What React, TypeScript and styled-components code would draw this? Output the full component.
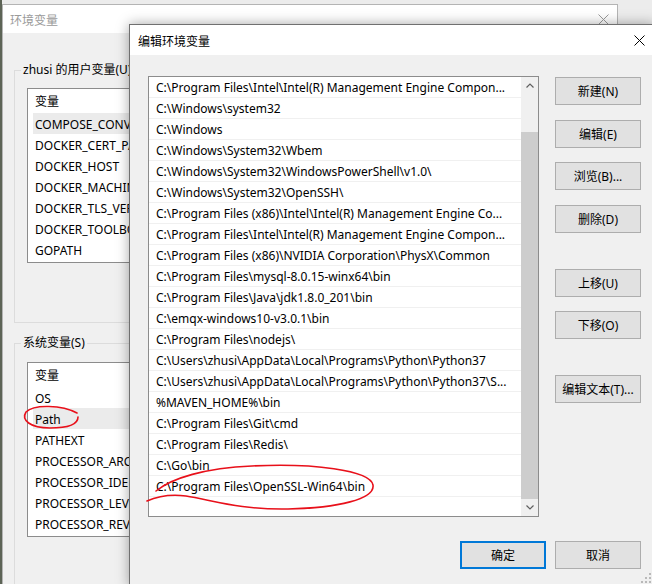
import styled, { createGlobalStyle } from "styled-components";

const GlobalStyle = createGlobalStyle`
  html, body {
    margin: 0;
    padding: 0;
  }
  body {
    width: 652px;
    height: 584px;
    overflow: hidden;
    font-family: "Noto Sans", "Noto Sans CJK SC", sans-serif;
    font-size: 12px;
    color: #000;
  }
`;

const Desktop = styled.div`
  position: relative;
  width: 652px;
  height: 584px;
  overflow: hidden;
  background: linear-gradient(to right, #5d6456 0 2px, #ececec 2px);
`;

/* ---------- background window: 环境变量 ---------- */

const BackWindow = styled.div`
  position: absolute;
  left: 2px;
  top: 4px;
  width: 616px;
  height: 600px;
  box-sizing: border-box;
  border: 1px solid #b4b4b4;
  background: #f0f0f0;
  display: flex;
  flex-direction: column;
`;

const TitleBar = styled.div<{ $height: number; $inactive?: boolean }>`
  height: ${(p) => p.$height}px;
  flex-shrink: 0;
  background: #fff;
  display: flex;
  align-items: center;
  padding-left: ${(p) => (p.$inactive ? 7 : 8)}px;
  color: ${(p) => (p.$inactive ? "#9a9a9a" : "#000")};
`;

const TitleText = styled.span`
  flex: 1;
  padding-top: 1px;
`;

const CloseButton = styled.div<{ $width: number }>`
  width: ${(p) => p.$width}px;
  height: 100%;
  display: flex;
  align-items: center;
  justify-content: center;
`;

const BackBody = styled.div`
  padding: 29px 0 0 11px;
  display: flex;
  flex-direction: column;
`;

const Group = styled.fieldset<{ $pt: number; $pb: number; $mt?: number }>`
  margin: ${(p) => p.$mt ?? 0}px 0 0 0;
  padding: ${(p) => p.$pt}px 12px ${(p) => p.$pb}px 12px;
  border: 1px solid #dcdcdc;
  min-width: 0;
  width: 600px;
  box-sizing: border-box;
`;

const Legend = styled.legend`
  padding: 0 2px;
  margin-left: -6px;
  line-height: 16px;
`;

/* the part of the list right of the dialog's edge is hidden by the dialog */
const VarList = styled.div`
  width: 112px;
  height: 175px;
  box-sizing: border-box;
  border: 1px solid #8c8c8c;
  border-right: none;
  background: #fff;
  padding-left: 5px;
  overflow: hidden;
`;

const VarHeader = styled.div`
  height: 24px;
  line-height: 26px;
  padding-left: 2px;
  overflow: hidden;
`;

const VarRow = styled.div<{ $selected?: boolean }>`
  height: 21px;
  line-height: 23px;
  padding-left: 2px;
  background: ${(p) => (p.$selected ? "#ebebeb" : "transparent")};
  white-space: nowrap;
  overflow: hidden;
`;

/* ---------- foreground dialog: 编辑环境变量 ---------- */

const Dialog = styled.div`
  position: absolute;
  left: 129px;
  top: 24px;
  width: 526px;
  height: 563px;
  box-sizing: border-box;
  border: 1px solid #707070;
  background: #f0f0f0;
  box-shadow: 0 0 12px rgba(0, 0, 0, 0.35);
  display: flex;
  flex-direction: column;
`;

const DialogBody = styled.div`
  padding: 21px 13px 0 18px;
  display: flex;
  flex-direction: column;
`;

const MainRow = styled.div`
  display: flex;
  align-items: flex-start;
`;

const PathList = styled.div`
  width: 391px;
  height: 441px;
  box-sizing: border-box;
  border: 1px solid #8c8c8c;
  background: #fff;
  display: flex;
  flex-shrink: 0;
`;

const PathRows = styled.div`
  flex: 1;
  min-width: 0;
  overflow: hidden;
`;

const PathRow = styled.div`
  height: 20px;
  line-height: 22px;
  border-bottom: 1px solid #f0f0f0;
  padding-left: 7px;
  white-space: nowrap;
  overflow: hidden;
`;

const ScrollBar = styled.div`
  width: 17px;
  flex-shrink: 0;
  display: flex;
  flex-direction: column;
  background: #f0f0f0;
`;

const ScrollArrow = styled.div`
  height: 17px;
  flex-shrink: 0;
  display: flex;
  align-items: center;
  justify-content: center;
`;

const ScrollThumb = styled.div`
  flex: 1;
  margin-top: 38px;
  background: #cdcdcd;
`;

const SideColumn = styled.div`
  margin-left: 16px;
  display: flex;
  flex-direction: column;
`;

const Button = styled.div<{ $mt?: number; $default?: boolean }>`
  width: 86px;
  height: 28px;
  box-sizing: border-box;
  margin-top: ${(p) => p.$mt ?? 0}px;
  background: #e1e1e1;
  border: ${(p) => (p.$default ? "2px solid #0078d7" : "1px solid #adadad")};
  display: flex;
  align-items: center;
  justify-content: center;
  white-space: nowrap;
`;

const Footer = styled.div`
  margin-top: 24px;
  display: flex;
  justify-content: flex-end;
  gap: 9px;
`;

const Grip = styled.svg`
  position: absolute;
  right: 2px;
  bottom: 2px;
`;

const Annotation = styled.svg`
  position: absolute;
  left: 0;
  top: 0;
  pointer-events: none;
  z-index: 10;
`;

// only the part left of the dialog is visible in the back window
const userVars = [
  "COMPOSE_CONV",
  "DOCKER_CERT_PA",
  "DOCKER_HOST",
  "DOCKER_MACHINE",
  "DOCKER_TLS_VER",
  "DOCKER_TOOLBO",
  "GOPATH",
];

const systemVars = [
  "OS",
  "Path",
  "PATHEXT",
  "PROCESSOR_ARC",
  "PROCESSOR_IDE",
  "PROCESSOR_LEV",
  "PROCESSOR_REV",
];

const paths = [
  "C:\\Program Files\\Intel\\Intel(R) Management Engine Compon...",
  "C:\\Windows\\system32",
  "C:\\Windows",
  "C:\\Windows\\System32\\Wbem",
  "C:\\Windows\\System32\\WindowsPowerShell\\v1.0\\",
  "C:\\Windows\\System32\\OpenSSH\\",
  "C:\\Program Files (x86)\\Intel\\Intel(R) Management Engine Co...",
  "C:\\Program Files\\Intel\\Intel(R) Management Engine Compon...",
  "C:\\Program Files (x86)\\NVIDIA Corporation\\PhysX\\Common",
  "C:\\Program Files\\mysql-8.0.15-winx64\\bin",
  "C:\\Program Files\\Java\\jdk1.8.0_201\\bin",
  "C:\\emqx-windows10-v3.0.1\\bin",
  "C:\\Program Files\\nodejs\\",
  "C:\\Users\\zhusi\\AppData\\Local\\Programs\\Python\\Python37",
  "C:\\Users\\zhusi\\AppData\\Local\\Programs\\Python\\Python37\\S...",
  "%MAVEN_HOME%\\bin",
  "C:\\Program Files\\Git\\cmd",
  "C:\\Program Files\\Redis\\",
  "C:\\Go\\bin",
  "C:\\Program Files\\OpenSSL-Win64\\bin",
];

function CloseIcon({ color }: { color: string }) {
  return (
    <svg width="11" height="11" viewBox="0 0 11 11">
      <path d="M0.5 0.5L10.5 10.5M10.5 0.5L0.5 10.5" stroke={color} strokeWidth="1" fill="none" />
    </svg>
  );
}

function Chevron({ up }: { up?: boolean }) {
  return (
    <svg width="8" height="5" viewBox="0 0 8 5">
      <path
        d={up ? "M0.5 4.5L4 1L7.5 4.5" : "M0.5 0.5L4 4L7.5 0.5"}
        stroke="#606060"
        strokeWidth="1.2"
        fill="none"
      />
    </svg>
  );
}

export default function App() {
  return (
    <>
      <GlobalStyle />
      <Desktop>
        <BackWindow>
          <TitleBar $height={28} $inactive>
            <TitleText>环境变量</TitleText>
            <CloseButton $width={28}>
              <CloseIcon color="#9a9a9a" />
            </CloseButton>
          </TitleBar>
          <BackBody>
            <Group $pt={10} $pb={59}>
              <Legend>zhusi 的用户变量(U)</Legend>
              <VarList>
                <VarHeader>变量</VarHeader>
                {userVars.map((v, i) => (
                  <VarRow key={v} $selected={i === 0}>
                    {v}
                  </VarRow>
                ))}
              </VarList>
            </Group>
            <Group $pt={11} $pb={60} $mt={12}>
              <Legend>系统变量(S)</Legend>
              <VarList>
                <VarHeader>变量</VarHeader>
                {systemVars.map((v) => (
                  <VarRow key={v} $selected={v === "Path"}>
                    {v}
                  </VarRow>
                ))}
              </VarList>
            </Group>
          </BackBody>
        </BackWindow>

        <Dialog>
          <TitleBar $height={30}>
            <TitleText>编辑环境变量</TitleText>
            <CloseButton $width={30}>
              <CloseIcon color="#000" />
            </CloseButton>
          </TitleBar>
          <DialogBody>
            <MainRow>
              <PathList>
                <PathRows>
                  {paths.map((p, i) => (
                    <PathRow key={i}>{p}</PathRow>
                  ))}
                </PathRows>
                <ScrollBar>
                  <ScrollArrow>
                    <Chevron up />
                  </ScrollArrow>
                  <ScrollThumb />
                  <ScrollArrow>
                    <Chevron />
                  </ScrollArrow>
                </ScrollBar>
              </PathList>
              <SideColumn>
                <Button $mt={1}>新建(N)</Button>
                <Button $mt={15}>编辑(E)</Button>
                <Button $mt={14}>浏览(B)...</Button>
                <Button $mt={15}>删除(D)</Button>
                <Button $mt={36}>上移(U)</Button>
                <Button $mt={14}>下移(O)</Button>
                <Button $mt={36}>编辑文本(T)...</Button>
              </SideColumn>
            </MainRow>
            <Footer>
              <Button $default>确定</Button>
              <Button>取消</Button>
            </Footer>
          </DialogBody>
          <Grip width="12" height="12" viewBox="0 0 12 12">
            {[
              [9, 1],
              [5, 5],
              [9, 5],
              [1, 9],
              [5, 9],
              [9, 9],
            ].map(([x, y]) => (
              <rect key={`${x}-${y}`} x={x} y={y} width="2" height="2" fill="#b9b9b9" />
            ))}
          </Grip>
        </Dialog>

        <Annotation width="652" height="584" viewBox="0 0 652 584">
          <path
            d="M77 413 C62 405, 34 404, 26 412 C21 420, 30 428, 50 428 C66 428, 78 425, 78 417"
            stroke="#e8101a"
            strokeWidth="1.6"
            fill="none"
            strokeLinecap="round"
          />
          <path
            d="M156 491 C172 478, 205 468, 252 466 C312 463, 370 470, 373 485 C375 499, 338 508, 288 509 C240 510, 212 500, 186 496 C170 494, 156 497, 147 501"
            stroke="#e8101a"
            strokeWidth="1.6"
            fill="none"
            strokeLinecap="round"
          />
        </Annotation>
      </Desktop>
    </>
  );
}
